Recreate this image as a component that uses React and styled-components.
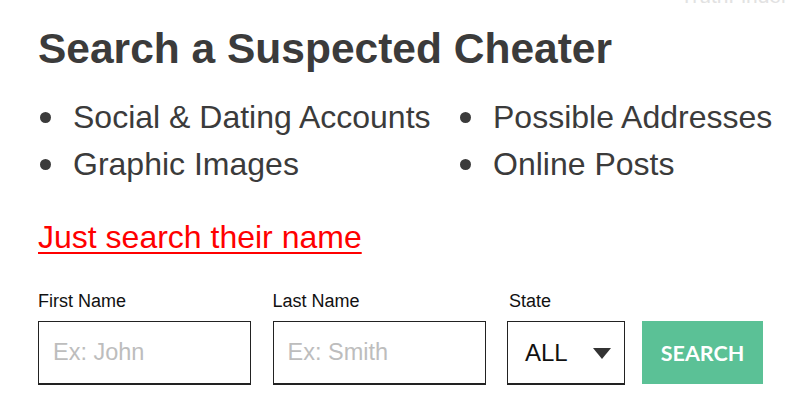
import React from "react";
import styled, { createGlobalStyle } from "styled-components";

const Global = createGlobalStyle`
  html, body { margin: 0; padding: 0; background: #fff; }
  body { font-family: "Liberation Sans", Arial, sans-serif; }
  * { box-sizing: border-box; }
`;

const Page = styled.div`
  width: 800px;
  height: 418px;
  overflow: hidden;
  padding: 0 12px 0 38px;
  display: flex;
  flex-direction: column;
`;

const Brand = styled.div`
  align-self: flex-end;
  margin: -14px 0 0 0;
  font-size: 21px;
  line-height: 20px;
  color: #e2e2e2;
`;

const Title = styled.h1`
  margin: 19px 0 0;
  font-size: 42.5px;
  line-height: 48px;
  font-weight: 700;
  color: #3b3b3b;
  white-space: nowrap;
`;

const Features = styled.ul`
  margin: 21px 0 0;
  padding: 0;
  list-style: none;
  display: grid;
  grid-template-columns: 420px 1fr;
`;

const Feature = styled.li`
  display: flex;
  align-items: center;
  gap: 22px;
  font-size: 32px;
  line-height: 47px;
  color: #3b3b3b;
  white-space: nowrap;
  &::before {
    content: "";
    width: 11px;
    height: 11px;
    margin-left: 2px;
    border-radius: 50%;
    background: #3b3b3b;
    flex: none;
  }
`;

const Link = styled.a`
  margin-top: 31px;
  align-self: flex-start;
  font-size: 32px;
  line-height: 36px;
  color: #ff0000;
  text-decoration: underline;
  text-decoration-thickness: 2px;
  text-underline-offset: 4px;
`;

const Form = styled.form`
  margin-top: 36px;
  display: flex;
  align-items: flex-end;
  gap: 21.5px;
`;

const Field = styled.label`
  display: flex;
  flex-direction: column;
  gap: 10px;
  flex: none;
  width: ${(p) => p.$w}px;
`;

const LabelText = styled.span`
  font-size: 18px;
  line-height: 20px;
  color: #111;
  padding-left: ${(p) => (p.$indent ? 2 : 0)}px;
`;

const Input = styled.input`
  width: 100%;
  height: 64px;
  border: 1px solid #222;
  border-bottom-width: 2px;
  padding: 0 14px;
  font-family: "Liberation Sans", Arial, sans-serif;
  font-size: 23.5px;
  color: #222;
  outline: none;
  &::placeholder { color: #bdbdbd; }
`;

const Select = styled.div`
  height: 64px;
  border: 1px solid #222;
  border-bottom-width: 2px;
  display: flex;
  align-items: center;
  justify-content: space-between;
  padding: 0 13px 0 17px;
  font-size: 24px;
  color: #111;
`;

const Caret = styled.span`
  width: 0;
  height: 0;
  margin-top: 2px;
  border-left: 9.5px solid transparent;
  border-right: 9.5px solid transparent;
  border-top: 11px solid #333;
`;

const Button = styled.button`
  flex: none;
  width: 121px;
  height: 63px;
  margin-bottom: 1px;
  margin-left: -4.5px;
  border: none;
  background: #5bc196;
  color: #fff;
  font-family: Lato, "Liberation Sans", sans-serif;
  font-weight: 700;
  font-size: 21.5px;
`;

export default function App() {
  return (
    <>
      <Global />
      <Page>
        <Brand>TruthFinder</Brand>
        <Title>Search a Suspected Cheater</Title>
        <Features>
          <Feature>Social &amp; Dating Accounts</Feature>
          <Feature>Possible Addresses</Feature>
          <Feature>Graphic Images</Feature>
          <Feature>Online Posts</Feature>
        </Features>
        <Link href="#">Just search their name</Link>
        <Form onSubmit={(e) => e.preventDefault()}>
          <Field $w={213}>
            <LabelText>First Name</LabelText>
            <Input placeholder="Ex: John" />
          </Field>
          <Field $w={213}>
            <LabelText>Last Name</LabelText>
            <Input placeholder="Ex: Smith" />
          </Field>
          <Field $w={118}>
            <LabelText $indent>State</LabelText>
            <Select>
              ALL
              <Caret />
            </Select>
          </Field>
          <Button type="submit">SEARCH</Button>
        </Form>
      </Page>
    </>
  );
}
